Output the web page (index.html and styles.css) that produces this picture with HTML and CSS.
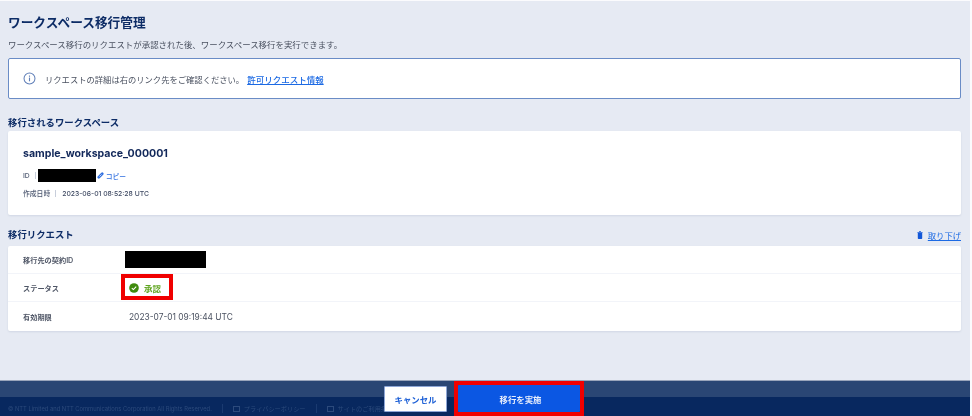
FILE: index.html
```html
<!DOCTYPE html>
<html lang="ja">
<head>
<meta charset="utf-8">
<title>ワークスペース移行管理</title>
<link rel="stylesheet" href="styles.css">
</head>
<body>
<div class="page">
  <main class="main">
    <h1 class="title">ワークスペース移行管理</h1>
    <p class="desc">ワークスペース移行のリクエストが承認された後、ワークスペース移行を実行できます。</p>
    <div class="notice">
      <svg class="notice-icon" viewBox="0 0 14 14" width="13" height="13" aria-hidden="true"><circle cx="7" cy="7" r="5.9" fill="none" stroke="#5f7fb8" stroke-width="1.1"/><rect x="6.4" y="6" width="1.2" height="4" fill="#5f7fb8"/><rect x="6.4" y="3.8" width="1.2" height="1.3" fill="#5f7fb8"/></svg>
      <span>リクエストの詳細は右のリンク先をご確認ください。</span><a class="link" href="#">許可リクエスト情報</a>
    </div>
    <h2 class="section-title first">移行されるワークスペース</h2>
    <section class="card ws-card">
      <div class="ws-name">sample_workspace_000001</div>
      <div class="meta meta-id">
        <span class="meta-label">ID</span><span class="meta-sep"></span><span class="redact redact-id"></span>
        <svg class="copy-icon" viewBox="0 0 8 8" width="7" height="7" aria-hidden="true"><path d="M2 6l4-4" fill="none" stroke="#2f6fe0" stroke-width="3" stroke-linecap="round"/><path d="M2.800 5.200l2.400-2.400" fill="none" stroke="#fff" stroke-width=".8"/></svg>
        <a class="copy" href="#">コピー</a>
      </div>
      <div class="meta meta-date">
        <span class="meta-label">作成日時</span><span class="meta-sep"></span><span class="meta-value">2023-06-01 08:52:28 UTC</span>
      </div>
    </section>
    <div class="section-head">
      <h2 class="section-title">移行リクエスト</h2>
      <a class="withdraw" href="#"><svg viewBox="0 0 6 8" width="6" height="8" aria-hidden="true"><path d="M0.4 1h5.2v.7H.4zM2 .2h2V1H2zM.8 2h4.400v5.200a.7.7 0 0 1-.7.7H1.500a.7.7 0 0 1-.7-.7z" fill="#1257d8"/></svg><span>取り下げ</span></a>
    </div>
    <section class="card req-card">
      <div class="row"><span class="row-label">移行先の契約ID</span><span class="redact redact-contract"></span></div>
      <div class="row"><span class="row-label">ステータス</span>
        <span class="status">
          <svg viewBox="0 0 10 10" width="10" height="10" aria-hidden="true"><circle cx="5" cy="5" r="4.800" fill="#3f8a0c"/><path d="M2.800 5.100l1.600 1.500 2.800-2.900" fill="none" stroke="#fff" stroke-width="1.100"/></svg>
          <span>承認</span>
        </span>
      </div>
      <div class="row row-last"><span class="row-label">有効期限</span><span class="row-value">2023-07-01 09:19:44 UTC</span></div>
    </section>
  </main>
  <footer class="footer">
    <div class="footer-band"></div>
    <div class="footer-base">
      <span class="copyright">© NTT Limited and NTT Communications Corporation All Rights Reserved.</span>
      <span class="foot-sep"></span>
      <span class="foot-link"><i class="foot-icon"></i>プライバシーポリシー</span>
      <span class="foot-sep"></span>
      <span class="foot-link"><i class="foot-icon"></i>サイトのご利用条件</span>
    </div>
    <div class="actions">
      <button class="btn btn-cancel" type="button">キャンセル</button>
      <span class="primary-mark"><button class="btn btn-primary" type="button">移行を実施</button></span>
    </div>
  </footer>
</div>
</body>
</html>
```
FILE: styles.css
```css
*, *::before, *::after { box-sizing: border-box; }
html, body { margin: 0; padding: 0; background: #fbfbfd; }
body {
  width: 972px;
  height: 416px;
  overflow: hidden;
  font-family: Inter, "Noto Sans CJK JP", sans-serif;
  color: #3a4250;
}
.page {
  width: 970px;
  height: 416px;
  padding-top: 1px;
  display: flex;
  flex-direction: column;
  background: #fbfbfd;
  filter: blur(.4px);
}
.main {
  flex: 1;
  min-height: 0;
  background: #e6eaf3;
  padding: 0 9px 0 8px;
}
.title {
  margin: 13px 0 0;
  font-size: 12.7px;
  line-height: 18px;
  font-weight: 700;
  color: #0d2c66;
}
.desc {
  margin: 7px 0 0;
  font-size: 8.45px;
  line-height: 12px;
  color: #4a5160;
}
.notice {
  margin-top: 7px;
  height: 41px;
  display: flex;
  align-items: center;
  padding-left: 14px;
  background: #fff;
  border: 1px solid #6a8cc6;
  border-radius: 2px;
  font-size: 8.3px;
  color: #4a5160;
}
.notice-icon { margin-right: 9px; }
.link {
  margin-left: 3px;
  font-size: 8.5px;
  color: #1c6ae4;
  text-decoration: underline;
  font-weight: 500;
}
.section-title {
  margin: 0;
  font-size: 9.4px;
  line-height: 12px;
  font-weight: 700;
  color: #0d2c66;
}
.section-title.first { margin-top: 18px; }
.card {
  background: #fff;
  border-radius: 2px;
  box-shadow: 0 1px 2px rgba(60, 80, 120, .12);
}
.ws-card {
  margin-top: 2px;
  height: 84px;
  padding: 16px 15px 0;
}
.ws-name {
  font-size: 10.6px;
  line-height: 14px;
  font-weight: 700;
  color: #12285a;
}
.meta {
  display: flex;
  align-items: center;
  font-size: 6.8px;
  font-weight: 500;
  color: #4f5a72;
}
.meta-id { margin-top: 8px; height: 13px; }
.meta-date { margin-top: 6px; height: 10px; }
.meta-sep {
  width: 1px;
  height: 7px;
  margin: 0 5px;
  background: #c8cedb;
}
.meta-id .meta-sep { margin-left: 5px; margin-right: 2px; }
.meta-date .meta-sep { margin-right: 6px; }
.meta-value { color: #3f4a63; }
.redact { display: inline-block; background: #000; }
.redact-id { width: 58px; height: 13px; }
.copy-icon { margin-left: 1px; }
.copy { margin-left: 2px; color: #2f6fe0; text-decoration: none; }
.section-head {
  margin-top: 13px;
  height: 14px;
  display: flex;
  align-items: center;
  justify-content: space-between;
}
.withdraw {
  display: flex;
  align-items: center;
  gap: 5px;
  font-size: 8.3px;
  color: #1c6ae4;
  text-decoration: underline;
}
.req-card { margin-top: 4px; height: 85px; }
.row {
  height: 28px;
  display: flex;
  align-items: center;
  padding-left: 15px;
  border-bottom: 1px solid #f2f4f9;
}
.row-last { height: 29px; border-bottom: 0; }
.row-label {
  width: 106px;
  font-size: 7.2px;
  font-weight: 600;
  color: #4f5666;
}
.redact-contract { width: 81px; height: 17px; margin: -1px 0 0 -4px; }
.status {
  position: relative;
  display: flex;
  align-items: center;
  gap: 5px;
  font-size: 8.5px;
  font-weight: 600;
  color: #5fa51f;
}
.status::after {
  content: "";
  position: absolute;
  left: -8px;
  top: -8px;
  width: 52px;
  height: 26px;
  border: 4px solid #f00000;
}
.row-value {
  font-size: 8.4px;
  color: #4a5160;
}
.footer {
  position: relative;
  height: 36px;
  border-top: 1px solid #9aa5bb;
  color: #2c4a7c;
}
.footer-band { height: 16px; background: #2a4674; }
.footer-base {
  height: 19px;
  background: #08285f;
  display: flex;
  align-items: center;
  padding: 4px 0 0 8px;
  font-size: 5.8px;
  white-space: nowrap;
}
.foot-sep { width: 1px; height: 9px; margin: 0 10px; background: #1a3a70; flex: none; }
.foot-link { display: flex; align-items: center; gap: 4px; font-size: 6.2px; }
.foot-icon { width: 7px; height: 6px; border: 1px solid #2c4a7c; display: inline-block; flex: none; }
.actions {
  position: absolute;
  left: 384px;
  top: 0;
  display: flex;
  align-items: flex-start;
  gap: 7px;
}
.btn {
  display: flex;
  align-items: center;
  justify-content: center;
  margin: 0;
  padding: 0;
  font-family: inherit;
  font-size: 8.4px;
  font-weight: 600;
  border-radius: 1px;
}
.btn-cancel {
  margin-top: 5px;
  width: 63px;
  height: 26px;
  background: #fff;
  color: #1c5fd6;
  border: 1px solid #8ea6d6;
}
.primary-mark {
  display: block;
  width: 130px;
  height: 35px;
  border: 4px solid #f00000;
}
.btn-primary {
  width: 100%;
  height: 100%;
  padding-left: 3px;
  background: #0b57e3;
  color: #e8eefc;
  border: 0;
}
```
